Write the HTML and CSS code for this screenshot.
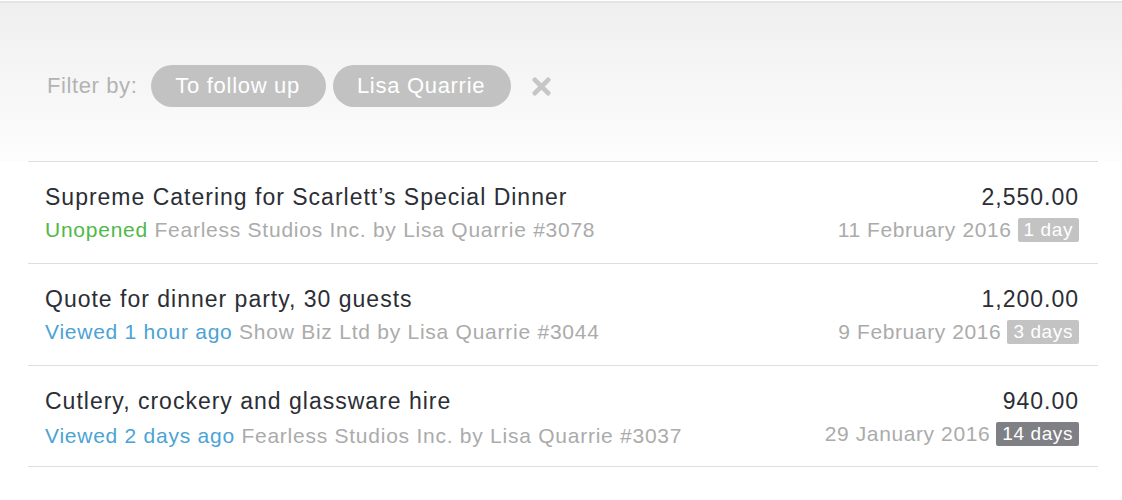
FILE: index.html
```html
<!DOCTYPE html>
<html>
<head>
<meta charset="utf-8">
<link rel="stylesheet" href="styles.css">
</head>
<body>
<div class="page">
  <header class="filter-bar">
    <span class="filter-label">Filter by:</span>
    <span class="pill">To follow up</span>
    <span class="pill">Lisa Quarrie</span>
    <svg class="clear" viewBox="0 0 20 20" width="19" height="19">
      <path d="M3 3 L17 17 M17 3 L3 17" stroke="#c6c6c6" stroke-width="5" stroke-linecap="round" fill="none"/>
    </svg>
  </header>
  <ul class="list">
    <li class="row">
      <div class="main">
        <div class="title">Supreme Catering for Scarlett’s Special Dinner</div>
        <div class="meta"><span class="status green">Unopened</span> Fearless Studios Inc. by Lisa Quarrie #3078</div>
      </div>
      <div class="side">
        <div class="amount">2,550.00</div>
        <div class="date">11 February 2016 <span class="badge">1 day</span></div>
      </div>
    </li>
    <li class="row">
      <div class="main">
        <div class="title">Quote for dinner party, 30 guests</div>
        <div class="meta"><span class="status blue">Viewed 1 hour ago</span> Show Biz Ltd by Lisa Quarrie #3044</div>
      </div>
      <div class="side">
        <div class="amount">1,200.00</div>
        <div class="date">9 February 2016 <span class="badge">3 days</span></div>
      </div>
    </li>
    <li class="row last">
      <div class="main">
        <div class="title">Cutlery, crockery and glassware hire</div>
        <div class="meta"><span class="status blue">Viewed 2 days ago</span> Fearless Studios Inc. by Lisa Quarrie #3037</div>
      </div>
      <div class="side">
        <div class="amount">940.00</div>
        <div class="date">29 January 2016 <span class="badge dark">14 days</span></div>
      </div>
    </li>
  </ul>
</div>
</body>
</html>
```
FILE: styles.css
```css
* { box-sizing: border-box; }
html, body { margin: 0; padding: 0; background: #fff; }
body { font-family: "Liberation Sans", Arial, sans-serif; }
.page { width: 1122px; height: 500px; border-top: 2px solid #e4e4e4; margin-top: 1px; }
.filter-bar {
  height: 158px;
  background: linear-gradient(#efefef, #fdfdfd);
  display: flex;
  align-items: center;
  padding: 8px 0 0 47px;
  gap: 7px;
}
.filter-label { font-size: 22px; letter-spacing: 0.6px; color: #b3b3b3; margin-right: 7px; }
.pill {
  height: 42px;
  display: inline-flex;
  align-items: center;
  padding: 0 26px 0 24px;
  border-radius: 21px;
  background: #c2c2c2;
  color: #fff;
  font-size: 22px;
  letter-spacing: 0.7px;
}
.clear { margin-left: 14px; }
.list { list-style: none; margin: 0 24px 0 28px; padding: 0; border-top: 1px solid #dedede; }
.row {
  height: 102px;
  border-bottom: 1px solid #dedede;
  display: flex;
  justify-content: space-between;
  padding: 22px 19px 0 17px;
}
.row.last { height: 101px; padding-top: 22px; }
.row.last .meta { margin-top: 9px; }
.title { font-size: 23px; line-height: 26px; letter-spacing: 1px; color: #2b2e35; }
.meta { font-size: 21px; line-height: 26px; letter-spacing: 0.75px; margin-top: 7px; color: #ababab; }
.green { color: #4fb84a; }
.blue { color: #4ba3d4; }
.side { text-align: right; }
.amount { font-size: 23px; line-height: 26px; letter-spacing: 1px; color: #2b2e35; }
.date { font-size: 21px; line-height: 26px; letter-spacing: 0.6px; margin-top: 7px; color: #ababab; display: flex; align-items: center; justify-content: flex-end; gap: 6px; }
.badge { background: #c3c3c3; color: #fff; font-size: 19px; line-height: 24px; padding: 0 6px; border-radius: 2px; letter-spacing: 0.6px; }
.badge.dark { background: #7f8085; }
```
